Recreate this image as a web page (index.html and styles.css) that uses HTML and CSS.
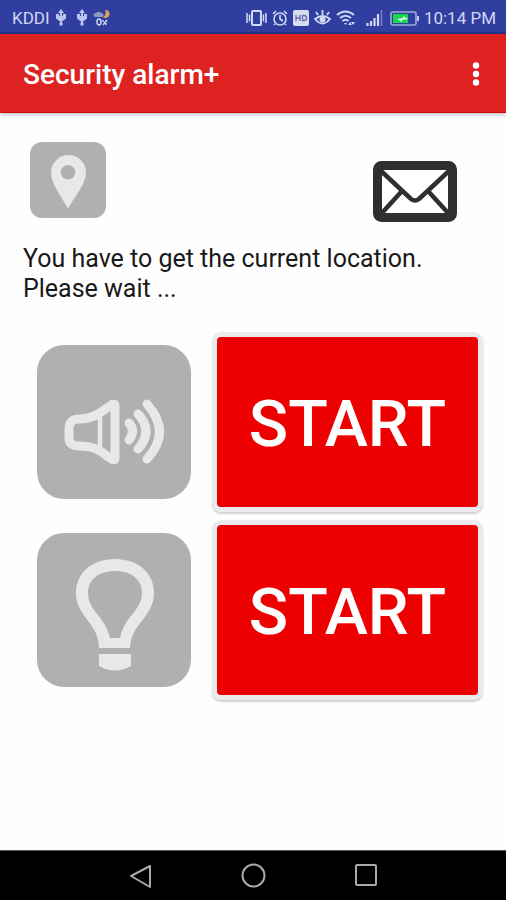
FILE: index.html
```html
<!DOCTYPE html>
<html lang="en">
<head>
<meta charset="utf-8">
<meta name="viewport" content="width=device-width, initial-scale=1">
<title>Security alarm+</title>
<link rel="stylesheet" href="styles.css">
</head>
<body>
<div class="status">
  <span class="carrier">KDDI</span>
  <svg class="usb" width="12" height="18" viewBox="0 0 12 18" aria-hidden="true"><path d="M6 2v13M2 6v3l4 3 4-3V6" fill="none" stroke="#bcc6ee" stroke-width="2"/><path d="M6 0l3 4H3zM1 5h3v3H1zM8 5h3v3H8zM2 7h8l-4 6z" fill="#bcc6ee"/><circle cx="6" cy="15" r="1.800" fill="#bcc6ee"/></svg>
  <svg class="usb" width="12" height="18" viewBox="0 0 12 18" aria-hidden="true"><path d="M6 2v13M2 6v3l4 3 4-3V6" fill="none" stroke="#bcc6ee" stroke-width="2"/><path d="M6 0l3 4H3zM1 5h3v3H1zM8 5h3v3H8zM2 7h8l-4 6z" fill="#bcc6ee"/><circle cx="6" cy="15" r="1.800" fill="#bcc6ee"/></svg>
  <svg class="weather" width="18" height="18" viewBox="0 0 18 18" aria-hidden="true"><path d="M12 1a4 4 0 1 1-2 7 5 5 0 0 0 2-7z" fill="#d8a65c"/><path d="M1 7a2 2 0 0 1 2-3 3 3 0 0 1 5 0 2 2 0 0 1 1 4H2z" fill="#8f9cc0"/><g fill="none" stroke="#d5daf3" stroke-width="1.4"><ellipse cx="6" cy="13" rx="2" ry="3"/><path d="M14 11l-4 5M10 11v2M13 14v2"/></g></svg>
  <span class="spacer"></span>
  <svg width="21" height="18" viewBox="0 0 21 18" aria-hidden="true"><g fill="none" stroke="#d1d7f4"><rect x="6" y="2" width="9" height="14" rx="1" stroke-width="2"/><path d="M1 4v10M3.500 5.500v7M20 4v10M17.500 5.500v7" stroke-width="1.500"/></g></svg>
  <svg width="16" height="18" viewBox="0 0 16 18" aria-hidden="true"><g fill="none" stroke="#d1d7f4" stroke-width="1.600"><circle cx="8" cy="10" r="6"/><path d="M8 6v4l3 2M1 5l3-3M15 5l-3-3M3 15l-1 1M13 15l1 1"/></g></svg>
  <svg width="16" height="18" viewBox="0 0 16 18" aria-hidden="true"><rect y="1" width="16" height="16" rx="2" fill="#d8dcf2"/><path d="M3 6v6M7 6v6M3 9h4M9.500 6.500v5h1.500q2.500 0 2.500-2.500t-2.500-2.500z" fill="none" stroke="#626bad" stroke-width="1.300"/></svg>
  <svg width="17" height="18" viewBox="0 0 17 18" aria-hidden="true"><path d="M1 10q7.500-6 15 0-7.500 9-15 0zM8.500 6V1M4 6L2 3M13 6l2-3" fill="none" stroke="#d1d7f4" stroke-width="1.800"/><circle cx="8.500" cy="10.500" r="3" fill="#d1d7f4"/></svg>
  <svg width="20" height="18" viewBox="0 0 20 18" aria-hidden="true"><path d="M1 6q8.500-7 17 0M4 9q5.500-4.500 11 0M6.500 12q3-2.500 6 0" fill="none" stroke="#d1d7f4" stroke-width="2"/><path d="M8 14l1.500 2 1.500-2zM12 16l2-3 2 3zM15 13h4l-2 3z" fill="#d1d7f4"/></svg>
  <svg class="signal" width="17" height="18" viewBox="0 0 17 18" aria-hidden="true"><path d="M1.500 17v-3M5 17v-5M8.500 17V9M12 17V5" stroke="#d1d7f4" stroke-width="2.200"/><path d="M15.500 17V1" stroke="#7782c8" stroke-width="1.500"/></svg>
  <svg class="battery" width="29" height="18" viewBox="0 0 29 18" aria-hidden="true"><rect x="1" y="3" width="25" height="13" rx="2" fill="none" stroke="#a0acd9" stroke-width="1.600"/><path d="M27 7h2v5h-2z" fill="#bdc6ec"/><path d="M3 5h15v9H3z" fill="#16d653"/><path d="M7 10l6-1V7l5 3-6 1v2z" fill="#d9ffe6"/></svg>
  <time>10:14 PM</time>
</div>
<header class="appbar">
  <h1>Security alarm+</h1>
  <button class="plain" aria-label="More options"><svg width="8" height="24" viewBox="0 0 8 24" fill="#fff"><circle cx="4" cy="3.500" r="3.200"/><circle cx="4" cy="12" r="3.200"/><circle cx="4" cy="20.500" r="3.200"/></svg></button>
</header>
<main>
  <div class="tools">
    <button class="plain" aria-label="Location"><svg width="76" height="76" viewBox="0 0 76 76"><rect width="76" height="76" rx="12" fill="#b0b0b0"/><path fill-rule="evenodd" d="M38 67C33 56 21 43 21 30.500a17.500 17.500 0 0 1 35 0C56 43 43 56 38 67zM38 23a7.300 7.300 0 1 0 0 14.600 7.300 7.300 0 0 0 0-14.600z" fill="#e8e8e8"/></svg></button>
    <button class="plain" aria-label="Mail"><svg width="84" height="61" viewBox="0 0 84 61"><rect x="4.500" y="4.500" width="75" height="52" rx="4" fill="#fff" stroke="#2f2f2f" stroke-width="9"/><path d="M7 9l31 29q4 3 8 0L77 9M29 30L8 53M55 30l21 23" fill="none" stroke="#2f2f2f" stroke-width="4.500"/></svg></button>
  </div>
  <p class="message">You have to get the current location.<br>Please wait ...</p>
  <div class="alarm">
    <svg width="154" height="154" viewBox="0 0 154 154" role="img" aria-label="Sound"><rect width="154" height="154" rx="27" fill="#b0b0b0"/><g fill="none" stroke="#e8e8e8" stroke-width="9" stroke-linecap="round" stroke-linejoin="round"><path d="M32 84v9q0 8 10 8c17 0 22 6 31 12q4 3 5 1V60q-1-2-5 1C64 67 57 74 42 74q-10 0-10 10z"/><path d="M63 70v33" stroke-width="4.500"/><path d="M92 78q7 8 0 17M101 69q16 17 0 35M110 59q25 28 0 55"/></g></svg>
    <button class="start">START</button>
  </div>
  <div class="alarm">
    <svg width="154" height="154" viewBox="0 0 154 154" role="img" aria-label="Light"><rect width="154" height="154" rx="27" fill="#b0b0b0"/><path fill-rule="evenodd" d="M62 115c0-25-23-31-23-55 0-20 16-34 39-34s39 14 39 34c0 24-23 30-24 55zM73 105h10c4-22 22-27 22-45 0-13-10-22-27-22S51 47 51 60c0 18 17 23 22 45z" fill="#e8e8e8"/><path d="M62 121h32v12q-16 9-32 0z" fill="#e8e8e8"/></svg>
    <button class="start">START</button>
  </div>
</main>
<nav class="navbar" aria-label="System">
  <button class="plain" aria-label="Back"><svg width="24" height="26" viewBox="0 0 24 26"><path d="M3 13L22 3v21z" fill="none" stroke="#aaa" stroke-width="2" stroke-linejoin="round"/></svg></button>
  <button class="plain" aria-label="Home"><svg width="26" height="26" viewBox="0 0 26 26"><circle cx="13.500" cy="12.500" r="11" fill="none" stroke="#aaa" stroke-width="2"/></svg></button>
  <button class="plain" aria-label="Recent apps"><svg width="24" height="26" viewBox="0 0 24 26"><rect x="2" y="2" width="20" height="20" rx="1" fill="none" stroke="#aaa" stroke-width="2"/></svg></button>
</nav>
</body>
</html>
```
FILE: styles.css
```css
* { box-sizing: border-box; }

body {
  margin: 0;
  min-height: 100vh;
  display: flex;
  flex-direction: column;
  background: #fefefe;
  color: #191919;
  font-family: Roboto, sans-serif;
}

svg { display: block; flex: none; }

button { font-family: inherit; cursor: pointer; }

.plain { padding: 0; border: 0; background: none; }

.status {
  display: flex;
  align-items: center;
  gap: 5px;
  height: 34px;
  padding: 4px 10px 0 12px;
  background: #303f9f;
  border-bottom: 2px solid #1f358c;
  color: #d1d7f4;
  font-size: 17px;
  white-space: nowrap;
}

.usb { margin-right: 4px; }
.weather { margin-left: -4px; }
.spacer { flex: 1; }
.signal { margin-left: 5px; }
.battery { margin-left: 2px; }

.appbar {
  position: relative;
  display: flex;
  align-items: center;
  justify-content: space-between;
  height: 79px;
  padding: 2px 26px 0 23px;
  background: #de2222;
  border-bottom: 1px solid #c80c0c;
  box-shadow: 0 2px 4px rgba(40, 40, 80, .25);
}

h1 {
  margin: 0;
  color: #fff;
  font-size: 28px;
  font-weight: 500;
}

main { flex: 1; padding: 29px 23px 24px; }

.tools {
  display: flex;
  justify-content: space-between;
  align-items: flex-end;
  height: 80px;
  padding: 0 26px 0 7px;
  margin-bottom: 22px;
}

.tools > :first-child { align-self: flex-start; }

.message {
  margin: 0 0 28px;
  font-size: 25px;
  line-height: 30px;
}

.alarm {
  display: flex;
  align-items: center;
  gap: 21px;
  padding-left: 14px;
  margin-bottom: 8px;
}

.start {
  flex: 1;
  height: 180px;
  padding: 4px 0 0;
  border: 5px solid #ebebed;
  border-radius: 9px;
  background: #ec0000;
  box-shadow: 0 2px 2px rgba(100, 110, 110, .3);
  color: #fff;
  font-size: 65px;
  font-weight: 500;
}

.navbar {
  display: flex;
  justify-content: center;
  align-items: center;
  gap: 88px;
  height: 50px;
  background: #000;
  border-top: 1px solid #555;
}
```
